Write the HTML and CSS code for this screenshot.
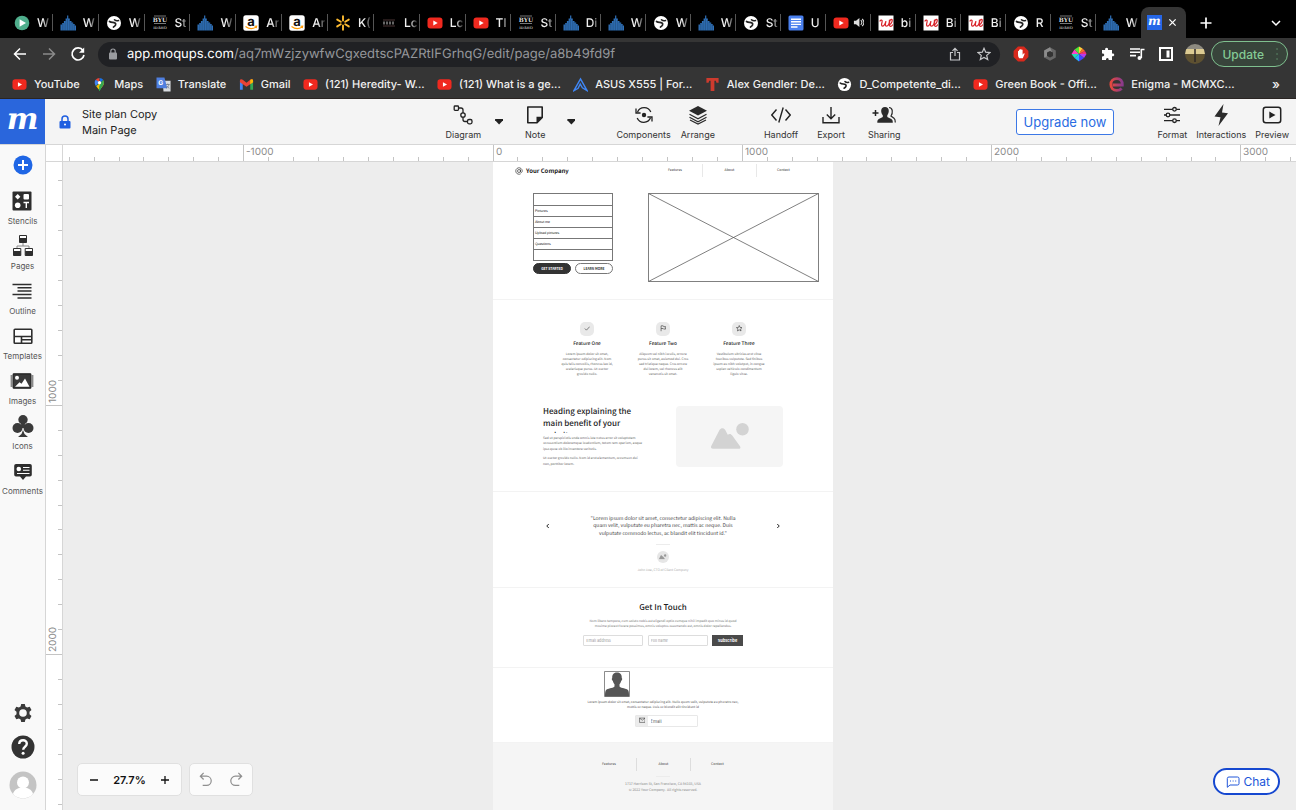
FILE: index.html
```html
<!DOCTYPE html>
<html lang="en">
<head>
<meta charset="utf-8">
<title>Site plan Copy - Main Page</title>
<link rel="stylesheet" href="styles.css">
</head>
<body>
<svg class="defs" aria-hidden="true">
  <symbol id="i-play" viewBox="0 0 16 16"><circle cx="8" cy="8" r="7.3" fill="#4fae8c"/><path d="M5.6 4.2v7.6L12 8z" fill="#fff"/></symbol>
  <symbol id="i-bars" viewBox="0 0 16 16"><path d="M.5 15.500V9.500h1.700V8h1.700V6h1.700V3.500h1.500V.5h1.200v3h1.500V6h1.700v1.500h1.700V9h1.500v1.500h1.500v5z" fill="#2f70b8"/><path d="M2.300 9v7M4 8v8M5.800 5v11M7.500 4v12M9.300 5v11M11 7v9M12.800 8v8M14.400 10v6" stroke="#123" stroke-width=".3"/></symbol>
  <symbol id="i-globe" viewBox="0 0 16 16"><circle cx="8" cy="8" r="7" fill="#fff"/><path d="M3.500 6.500c2 1.500 4 .5 5.500 1.500s.5 3-1.500 4" fill="none" stroke="#222" stroke-width="1.700" stroke-linecap="round"/><path d="M8.500 4.800c1 1 2.500 1.200 4 .8" fill="none" stroke="#222" stroke-width="1.600" stroke-linecap="round"/></symbol>
  <symbol id="i-byu" viewBox="0 0 16 16"><path d="M2 1h12M2 8.500h12" stroke="#aaa" stroke-width=".7"/><text x="8" y="7" text-anchor="middle" class="byu">BYU</text><text x="8" y="14" text-anchor="middle" class="byu-sub">IDAHO</text></symbol>
  <symbol id="i-amazon" viewBox="0 0 16 16"><rect x=".3" y=".3" width="15.400" height="15.400" rx="2.500" fill="#fff"/><text x="8" y="10.500" text-anchor="middle" class="amz">a</text><path d="M2.500 11.500c3.500 2.600 7.500 2.600 10.500.6M11.500 11.300l2.200-.1-.5 2" fill="none" stroke="#f90" stroke-width="1.100"/></symbol>
  <symbol id="i-spark" viewBox="0 0 16 16"><path d="M8 1.200v4.300M8 10.500v4.300M2.200 4.600l3.600 2.100M10.200 9.300l3.600 2.100M2.200 11.400l3.600-2.100M10.200 6.700l3.600-2.100" stroke="#fdbb30" stroke-width="1.900" stroke-linecap="round"/></symbol>
  <symbol id="i-dim" viewBox="0 0 16 16"><path d="M2 5h12M2 11h12" stroke="#4b3535"/><path d="M2 8h12" stroke="#666" stroke-width="3" stroke-dasharray="2 1"/></symbol>
  <symbol id="i-yt" viewBox="0 0 16 16"><rect x=".5" y="2.500" width="15" height="11" rx="3" fill="#f0291f"/><path d="M6.300 5.500v5L10.700 8z" fill="#fff"/></symbol>
  <symbol id="i-docs" viewBox="0 0 16 16"><rect x=".5" y=".5" width="15" height="15" rx="1.500" fill="#4a80ee"/><path d="M3 4.200h10M3 6.800h10M3 9.400h10M3 12h6.500" stroke="#fff" stroke-width="1.400"/></symbol>
  <symbol id="i-wal" viewBox="0 0 16 16"><rect x=".5" y=".5" width="15" height="15" fill="#fff"/><path d="M2 6c.8-1.500 2.600-1.200 2.100.8-.6 2.200-1 4.400.4 4.400 1.500 0 2.600-2.300 3.500-5-.8 2.700-1 5 .4 5 1.900 0 3.300-3.500 3-6M10.500 9.700c3.300 0 4.700-5.400 3-5.400-1.900 0-3.700 7.200-.8 7 .8 0 1.400-.6 1.800-1.400" fill="none" stroke="#d8232a" stroke-width="1.200" stroke-linecap="round"/></symbol>
  <symbol id="i-mountain" viewBox="0 0 152 104"><circle cx="126" cy="25" r="25"/><path d="M2 90 34 28c6-10 17-10 23 0l10 19c6-5 13-5 18 3l31 43c4 6 1 10-5 10H8c-8 0-10-6-6-13z"/></symbol>
</svg>

<div class="browser">
  <div class="tabs">
    <a class="tab wide" href="#"><svg><use href="#i-play"/></svg><span>W</span></a>
    <a class="tab wide" href="#"><svg><use href="#i-bars"/></svg><span>W</span></a>
    <a class="tab wide" href="#"><svg><use href="#i-globe"/></svg><span>W</span></a>
    <a class="tab wide" href="#"><svg><use href="#i-byu"/></svg><span>St</span></a>
    <a class="tab wide" href="#"><svg><use href="#i-bars"/></svg><span>W</span></a>
    <a class="tab wide" href="#"><svg><use href="#i-amazon"/></svg><span>Ar</span></a>
    <a class="tab wide" href="#"><svg><use href="#i-amazon"/></svg><span>Ar</span></a>
    <a class="tab wide" href="#"><svg><use href="#i-spark"/></svg><span>K(</span></a>
    <a class="tab wide" href="#"><svg><use href="#i-dim"/></svg><span>Lc</span></a>
    <a class="tab wide" href="#"><svg><use href="#i-yt"/></svg><span>Lc</span></a>
    <a class="tab" href="#"><svg><use href="#i-yt"/></svg><span>Tl</span></a>
    <a class="tab" href="#"><svg><use href="#i-byu"/></svg><span>St</span></a>
    <a class="tab" href="#"><svg><use href="#i-bars"/></svg><span>Di</span></a>
    <a class="tab" href="#"><svg><use href="#i-bars"/></svg><span>W</span></a>
    <a class="tab" href="#"><svg><use href="#i-globe"/></svg><span>W</span></a>
    <a class="tab" href="#"><svg><use href="#i-bars"/></svg><span>W</span></a>
    <a class="tab" href="#"><svg><use href="#i-globe"/></svg><span>St</span></a>
    <a class="tab" href="#"><svg><use href="#i-docs"/></svg><span>U</span></a>
    <a class="tab audible" href="#" aria-label="Playing tab"><svg><use href="#i-yt"/></svg><svg class="speaker" viewBox="0 0 12 12"><path d="M1 4h2.300L7 1v10L3.300 8H1z" fill="#ddd"/><path d="M8.500 3.500c1.500 1.500 1.500 3.500 0 5M10 2c2.300 2.400 2.300 5.600 0 8" fill="none" stroke="#ddd" stroke-width="1.100"/></svg></a>
    <a class="tab" href="#"><svg><use href="#i-wal"/></svg><span>bi</span></a>
    <a class="tab" href="#"><svg><use href="#i-wal"/></svg><span>Bi</span></a>
    <a class="tab" href="#"><svg><use href="#i-wal"/></svg><span>Bi</span></a>
    <a class="tab" href="#"><svg><use href="#i-globe"/></svg><span>R</span></a>
    <a class="tab" href="#"><svg><use href="#i-byu"/></svg><span>St</span></a>
    <a class="tab last" href="#"><svg><use href="#i-bars"/></svg><span>W</span></a>
    <div class="tab-active"><span class="m-fav">m</span><button class="bare" aria-label="Close tab"><svg viewBox="0 0 10 10"><path d="M1.500 1.500l7 7M8.500 1.500l-7 7" stroke="#fff" stroke-width="1.400"/></svg></button></div>
    <button class="bare newtab" aria-label="New tab"><svg viewBox="0 0 12 12"><path d="M6 .5v11M.5 6h11" stroke="#fff" stroke-width="1.700"/></svg></button>
    <button class="bare tabmenu" aria-label="Search tabs"><svg viewBox="0 0 12 12"><path d="M2 4l4 4 4-4" fill="none" stroke="#fff" stroke-width="1.500"/></svg></button>
  </div>

  <div class="navrow">
    <button class="bare" aria-label="Back"><svg viewBox="0 0 16 16"><path d="M14 8H3M8 2.500L2.500 8 8 13.500" fill="none" stroke="#fff" stroke-width="1.500"/></svg></button>
    <button class="bare" aria-label="Forward"><svg viewBox="0 0 16 16"><path d="M2 8h11M8 2.500L13.500 8 8 13.500" fill="none" stroke="#8b8b8b" stroke-width="1.500"/></svg></button>
    <button class="bare" aria-label="Reload"><svg viewBox="0 0 16 16"><path d="M13 4.500A6 6 0 1 0 14 9" fill="none" stroke="#fff" stroke-width="1.700"/><path d="M14.200 1.500v5.200H9z" fill="#fff"/></svg></button>
    <div class="url">
      <svg class="url-lock" viewBox="0 0 10 12"><rect x="1" y="4.500" width="8" height="7" rx="1" fill="#9a9ca0"/><path d="M2.800 5V3.200a2.200 2.200 0 0 1 4.400 0V5" fill="none" stroke="#9a9ca0" stroke-width="1.200"/></svg>
      <p class="url-text">app.moqups.com<span>/aq7mWzjzywfwCgxedtscPAZRtIFGrhqG/edit/page/a8b49fd9f</span></p>
      <button class="bare" aria-label="Share"><svg viewBox="0 0 14 14"><path d="M5 5.500H2.500V13h9V5.500H9M7 9V1.500M4.500 3.800L7 1.300l2.500 2.500" fill="none" stroke="#c6c7c9" stroke-width="1.200"/></svg></button>
      <button class="bare" aria-label="Bookmark"><svg viewBox="0 0 14 14"><path d="M7 1.300l1.700 3.900 4.200.4-3.200 2.800 1 4.200L7 10.400l-3.700 2.200 1-4.200L1.100 5.600l4.200-.4z" fill="none" stroke="#c6c7c9" stroke-width="1.200"/></svg></button>
    </div>
    <div class="exts">
      <svg viewBox="0 0 16 16"><path d="M5 .6h6L15.400 5v6L11 15.400H5L.6 11V5z" fill="#d9291c"/><path d="M5 8V5.200c0-.7 1-.7 1 0V4c0-.8 1.200-.8 1.200 0v-.4c0-.8 1.200-.8 1.200 0V4c0-.8 1.200-.8 1.200 0v4.800l1-1.200c.6-.6 1.300 0 .9.700L9.800 12.200H6.200C5.300 11 5 10 5 8z" fill="#fff"/></svg>
      <svg viewBox="0 0 16 16"><path d="M8 1.300l5.800 3.300v6.800L8 14.700l-5.800-3.300V4.600z" fill="#666"/><path d="M8 1.300L11 8l-8.800 3.400V4.600z" fill="#8c8c8c"/><path d="M8 5l3 1.600v3.300L8 11.500 5 9.900V6.600z" fill="#333"/></svg>
      <svg viewBox="0 0 16 16"><path d="M8 8V.5l3.500 2z" fill="#ffd13b"/><path d="M8 8l3.500-5.500L14 5z" fill="#ff6a2b"/><path d="M8 8l6-3 1.500 3z" fill="#f0317a"/><path d="M8 8h7.500L13 12z" fill="#b33df1"/><path d="M8 8l5 4-5 3.500z" fill="#4046ff"/><path d="M8 8v7.500L3.500 12z" fill="#25b6ff"/><path d="M8 8l-4.500 4L.5 8z" fill="#24ddb3"/><path d="M8 8H.5L3.500 3.500z" fill="#ff40c8"/><path d="M8 8L3.500 3.500 8 .5z" fill="#52e334"/></svg>
      <svg viewBox="0 0 16 16"><path d="M2 4h3.200c-.8-3 3.600-3 2.800 0H12v3.600c3-.8 3 3.200 0 2.600V14H8.600c.6-2.800-3-2.800-2.600 0H2v-3.600c3 .4 3-3.200 0-2.800z" fill="#fff"/></svg>
      <svg viewBox="0 0 16 16"><path d="M1 3h10M1 6.300h10M1 9.600h6" stroke="#fff" stroke-width="1.600"/><circle cx="10.500" cy="12" r="2" fill="#fff"/><path d="M12.300 12V3.500H15.500" fill="none" stroke="#fff" stroke-width="1.600"/></svg>
      <svg viewBox="0 0 16 16"><rect x="2" y="2" width="12" height="12" fill="#333" stroke="#fff" stroke-width="2"/><path d="M8.500 4.500h3v7h-3z" fill="#fff"/></svg>
      <svg class="me" viewBox="0 0 20 20"><clipPath id="c"><circle cx="10" cy="10" r="10"/></clipPath><g clip-path="url(#c)"><path d="M0 0h20v6H0z" fill="#8d8a80"/><path d="M0 5h20v5H0z" fill="#dccb92"/><path d="M0 10h20v10H0z" fill="#5e5131"/><path d="M10 5v13" stroke="#2c2727" stroke-width="1.500"/></g></svg>
      <button class="update">Update<svg viewBox="0 0 4 14"><path d="M2 2h.1M2 7h.1M2 12h.1" stroke="#4c6b55" stroke-width="2" stroke-linecap="round"/></svg></button>
    </div>
  </div>

  <nav class="bookmarks">
    <a href="#"><svg><use href="#i-yt"/></svg>YouTube</a>
    <a href="#"><svg viewBox="0 0 16 16"><path d="M8 1a5 5 0 0 0-4 1.900L8 6z" fill="#ea4335"/><path d="M4 2.900C2 5 3 8 4.300 9.600L8 5.500z" fill="#4285f4"/><path d="M4.300 9.600C6.500 12 7.300 13 8 15.200c.6-2.200 1.500-3.200 2.800-4.800L8 6z" fill="#34a853"/><path d="M4.600 9.900L12 3.600c1.500 3 .4 5-1.600 7.300L7 13z" fill="#fbbc04"/><path d="M10.400 10.900C12.500 8.500 13.500 6 12 3L9.500 6l-2 4L8 15.200z" fill="#34a853"/><path d="M8 1a5 5 0 0 1 4 2L9 6z" fill="#1a73e8"/><circle cx="8" cy="6" r="1.700" fill="#fff"/></svg>Maps</a>
    <a href="#"><svg viewBox="0 0 16 16"><path d="M7 4h8.500v11.500H8z" fill="#d8dbe0"/><path d="M.5.5H9L12 12H.5z" fill="#4f7fe0"/><text x="2.500" y="9" class="gt">G</text><path d="M10.500 8h4M12.500 7v1M13.800 8c-.5 2-1.500 3-3 4M11.500 9.500c.6 1 1.500 2 2.700 2.500" fill="none" stroke="#5f6b80" stroke-width=".7"/></svg>Translate</a>
    <a href="#"><svg viewBox="0 0 16 16"><path d="M1 4v9.500h3V7z" fill="#4285f4"/><path d="M15 4v9.500h-3V7z" fill="#34a853"/><path d="M1 4c0-1.600 1.800-2 3-1l4 3 4-3c1.200-1 3-.6 3 1v1.500L8 10.500 1 5.500z" fill="#ea4335"/><path d="M12 3c1.200-1 3-.6 3 1v1.500L12 7.700z" fill="#fbbc04"/></svg>Gmail</a>
    <a href="#"><svg><use href="#i-yt"/></svg>(121) Heredity- W...</a>
    <a href="#"><svg><use href="#i-yt"/></svg>(121) What is a ge...</a>
    <a href="#"><svg viewBox="0 0 16 16"><path d="M8 2l7 12.500-5-3-2.300-4L5.500 12 1 14.500z" fill="none" stroke="#3f86f4" stroke-width="1.500"/></svg>ASUS X555 | For...</a>
    <a href="#"><svg viewBox="0 0 16 16"><path d="M1.500 1h13v5h-2.300l-.7-2H10v11H6V4H4.500l-.7 2H1.500z" fill="#cd3b2e"/></svg>Alex Gendler: De...</a>
    <a href="#"><svg><use href="#i-globe"/></svg>D_Competente_di...</a>
    <a href="#"><svg><use href="#i-yt"/></svg>Green Book - Offi...</a>
    <a href="#"><svg viewBox="0 0 16 16"><linearGradient id="eg"><stop offset="0" stop-color="#e5483d"/><stop offset="1" stop-color="#8a3a8c"/></linearGradient><path d="M4 8.500h10.200C14.500 4 12 1.800 8.500 1.800 4.500 1.800 2 4.500 2 8s2.500 6.300 6.300 6.300c2 0 3.900-.7 5.200-2.100" fill="none" stroke="url(#eg)" stroke-width="3"/></svg>Enigma - MCMXC...</a>
    <button class="bare more" aria-label="More bookmarks">»</button>
  </nav>
</div>

<header class="appbar">
  <a class="logo" href="#">m</a>
  <svg class="lock" viewBox="0 0 12 14"><rect x=".5" y="6" width="11" height="7.500" rx="1" fill="#1f5fe0"/><path d="M3 6V4a3 3 0 0 1 6 0v2" fill="none" stroke="#1f5fe0" stroke-width="1.500"/><circle cx="6" cy="9.500" r="1" fill="#fff"/></svg>
  <div class="titles"><p>Site plan Copy</p><p>Main Page</p></div>
  <div class="tools first">
    <button class="tool"><svg viewBox="0 0 20 20"><path d="M5.500 3h2.500q2 0 2 2v3M10 12v2.500q0 2 2 2h2.500" fill="none" stroke="#222" stroke-width="1.300"/><rect x="1.200" y="1" width="4.300" height="4.300" rx=".8" fill="none" stroke="#222" stroke-width="1.300"/><circle cx="10" cy="10" r="2.200" fill="none" stroke="#222" stroke-width="1.300"/><rect x="14.500" y="14.500" width="4.500" height="4.300" rx="1.500" fill="none" stroke="#222" stroke-width="1.300"/></svg>Diagram</button>
    <button class="caret" aria-label="Diagram options"></button>
    <button class="tool note"><svg viewBox="0 0 20 20"><path d="M2.800 2h14.400v10.500L12 17.800H2.800z" fill="none" stroke="#222" stroke-width="1.600" stroke-linejoin="round"/><path d="M11.500 18.300v-6.500H18z" fill="#222"/></svg>Note</button>
    <button class="caret" aria-label="Note options"></button>
  </div>
  <div class="tools second">
    <button class="tool"><svg viewBox="0 0 20 20"><path d="M3.500 7.200A7.200 7.200 0 0 1 16.800 7M16.500 12.800A7.200 7.200 0 0 1 3.200 13" fill="none" stroke="#222" stroke-width="1.300"/><path d="M2 3.500V8h4.600M18 16.500V12h-4.600" fill="none" stroke="#222" stroke-width="1.300"/><circle cx="10" cy="10" r="2.200" fill="#222"/></svg>Components</button>
    <button class="tool"><svg viewBox="0 0 20 20"><path d="M10 1l9 4.800-9 4.700-9-4.700z" fill="#2b2b2b"/><path d="M1.500 9.200L10 13.700l8.500-4.500M1.500 12.200l8.500 4.500 8.500-4.500M2 15l8 4 8-4" fill="none" stroke="#2b2b2b" stroke-width="1.200"/></svg>Arrange</button>
  </div>
  <div class="tools third">
    <button class="tool"><svg viewBox="0 0 20 20"><path d="M5.500 4.500L.8 10l4.700 5.500M14.500 4.500l4.700 5.500-4.700 5.500M12.200 2.500l-4.400 15" fill="none" stroke="#222" stroke-width="1.400"/></svg>Handoff</button>
    <button class="tool"><svg viewBox="0 0 20 20"><path d="M2 12v5.800h16V12M10 2v11.500M5.800 9.500l4.200 4.200 4.200-4.200" fill="none" stroke="#222" stroke-width="1.400"/></svg>Export</button>
    <button class="tool"><svg class="share" viewBox="0 0 24 20"><path d="M3.500 5v6M.5 8h6" stroke="#222" stroke-width="1.500"/><path d="M13 2c5 0 4.300 6 2.300 8.200v1.700l4 2c1.300.7 1.500 2 1.500 3.800H5.300c0-1.800.2-3.100 1.500-3.800l4-2v-1.700C8.700 8 8 2 13 2z" fill="#2b2b2b"/><path d="M17 2.500c4 0 4 5.500 2 8.500l3 2.300c1 .8 1.300 2 1.300 4.200" fill="none" stroke="#2b2b2b" stroke-width="1.200"/></svg>Sharing</button>
  </div>
  <button class="upgrade">Upgrade now</button>
  <div class="tools fourth">
    <button class="tool"><svg viewBox="0 0 20 20"><path d="M2 4.300h16M2 10h16M2 15.700h16" stroke="#222" stroke-width="1.300"/><g fill="#f4f4f4" stroke="#222" stroke-width="1.300"><circle cx="12.500" cy="4.300" r="1.800"/><circle cx="6" cy="10" r="1.800"/><circle cx="12.500" cy="15.700" r="1.800"/></g></svg>Format</button>
    <button class="tool"><svg class="bolt" viewBox="0 0 20 22"><path d="M12.500 0L3.500 12.500l6 .8L7.500 22 17 9.300l-6-.8z" fill="#2b2b2b"/></svg>Interactions</button>
    <button class="tool"><svg viewBox="0 0 20 20"><rect x="1.300" y="2.300" width="17.400" height="15.400" rx="2.500" fill="none" stroke="#222" stroke-width="1.500"/><path d="M7.300 6.500v7l6.200-3.500z" fill="#222"/></svg>Preview</button>
  </div>
</header>

<main class="work">
  <aside class="side">
    <button class="bare add" aria-label="Add"><svg viewBox="0 0 20 20"><circle cx="10" cy="10" r="9.500" fill="#1f66e5"/><path d="M10 5v10M5 10h10" stroke="#fff" stroke-width="2"/></svg></button>
    <button class="pane"><svg viewBox="0 0 24 24"><rect x="2.500" y="2.500" width="19" height="19" rx="1" fill="#2e2e2e"/><path d="M7.700 5l2.700 2.700-2.700 2.700L5 7.700z" fill="#fff"/><rect x="13.500" y="5" width="5.500" height="5.500" rx="1" fill="#fff"/><circle cx="7.700" cy="16.300" r="2.800" fill="#fff"/><path d="M13.500 13.500h5.500M16.300 13.500V19" stroke="#fff" stroke-width="1.400"/></svg>Stencils</button>
    <button class="pane"><svg viewBox="0 0 24 24"><path d="M12 9v3M6 14v-2h12v2" fill="none" stroke="#888"/><g fill="#fff" stroke="#2e2e2e"><path d="M8.500 1.500h7v7h-7zM2.500 14.500h7.300v7H2.500zM14.200 14.500h7.300v7h-7.300z"/></g><path d="M8.500 4h7v4.500h-7zM2.500 17h7.300v4.500H2.500zM14.200 17h7.300v4.500h-7.300z" fill="#2e2e2e"/></svg>Pages</button>
    <button class="pane"><svg viewBox="0 0 24 24"><path d="M2.500 5.500h19M7.500 8.700h14M7.500 12h14M2.500 15.500h19M7.500 19h14" stroke="#2e2e2e" stroke-width="1.500"/></svg>Outline</button>
    <button class="pane"><svg viewBox="0 0 24 24"><rect x="3.200" y="5.200" width="17.600" height="14" rx=".8" fill="#fff" stroke="#2e2e2e" stroke-width="1.600"/><path d="M3 12.500h18M10.500 12.500V19M10.500 15.800H21" stroke="#2e2e2e" stroke-width="1.600"/></svg>Templates</button>
    <button class="pane"><svg viewBox="0 0 24 24"><path d="M1.500 6v12M22.500 6v12" stroke="#8a8a8a" stroke-width="1.800"/><rect x="3.200" y="4.800" width="17.600" height="14.400" rx=".6" fill="#3a3a3a" stroke="#222" stroke-width="1.200"/><circle cx="7" cy="8.700" r="2" fill="#fff"/><path d="M5 17.800l4.500-4.500 2 1.500 3.500-5.300 4.500 8.300z" fill="#fff"/></svg>Images</button>
    <button class="pane"><svg viewBox="0 0 24 24"><g fill="#3a3a3a"><circle cx="12" cy="5.700" r="4.700"/><circle cx="6.500" cy="14" r="5"/><circle cx="17.500" cy="14" r="5"/><path d="M10.500 8h3l1 6h-5zM12 16l1.500 4 3.500 3H7l3.500-3z"/></g></svg>Icons</button>
    <button class="pane"><svg viewBox="0 0 24 24"><path d="M5 5h14a1.800 1.800 0 0 1 1.800 1.800v9A1.800 1.800 0 0 1 19 17.600h-4L12 21l-3-3.400H5a1.800 1.800 0 0 1-1.800-1.800v-9A1.800 1.800 0 0 1 5 5z" fill="#2e2e2e"/><circle cx="7.800" cy="10" r="2.300" fill="#fff"/><path d="M12 8.500h6.500M12 11.200h6.500M6 14.500h12.500" stroke="#fff" stroke-width="1.100"/></svg>Comments</button>
    <div class="side-end">
      <button class="bare" aria-label="Settings"><svg class="s20" viewBox="0 0 20 20"><path d="M8.200 1h3.600l.6 2.600 1.700 1 2.600-.8 1.800 3.100-2 1.900v2.400l2 1.900-1.800 3.100-2.600-.8-1.700 1-.6 2.600H8.200l-.6-2.600-1.700-1-2.600.8-1.800-3.100 2-1.900V8.800l-2-1.900 1.800-3.100 2.600.8 1.700-1z" fill="#3a3a3a"/><circle cx="10" cy="10" r="3.800" fill="#f9f9f9"/></svg></button>
      <button class="bare" aria-label="Help"><svg class="s24" viewBox="0 0 24 24"><circle cx="12" cy="12" r="11.500" fill="#333"/><path d="M8.200 9c.2-5 7.700-4.900 7.600-.2 0 3-3.600 2.900-3.600 5.900" fill="none" stroke="#fff" stroke-width="2.400"/><circle cx="12.100" cy="18.300" r="1.500" fill="#fff"/></svg></button>
      <button class="bare" aria-label="Account"><svg class="s28" viewBox="0 0 28 28"><circle cx="14" cy="14" r="13.500" fill="#c4c4c4"/><circle cx="14" cy="11.500" r="6" fill="#fff"/><path d="M4 23c1-5 6-6.500 10-6.500S23 18 24 23a13.500 13.500 0 0 1-20 0z" fill="#fff"/></svg></button>
    </div>
  </aside>
  <div class="stage">
    <div class="corner"></div>
    <svg class="ruler-x" id="ruler-x"></svg>
    <svg class="ruler-y" id="ruler-y"></svg>
    <div class="canvas">
      <article class="board">
        <header class="b-head">
          <div class="b-brand"><svg viewBox="0 0 32 32"><circle cx="16" cy="16" r="6" fill="none" stroke="#222" stroke-width="2.500"/><path d="M22 10v8c0 6 7 5 7-2a13 13 0 1 0-6 11" fill="none" stroke="#222" stroke-width="2.500"/></svg>Your Company</div>
          <nav class="b-nav"><a href="#">Features</a><a href="#">About</a><a href="#">Contact</a></nav>
        </header>
        <section class="b-hero">
          <div class="b-left">
            <ul class="b-list"><li></li><li>Pictures</li><li>About me</li><li>Upload pictures</li><li>Questions</li><li></li></ul>
            <div class="b-ctas"><button class="dark">GET STARTED</button><button>LEARN MORE</button></div>
          </div>
          <svg class="b-pic" viewBox="0 0 684 356" preserveAspectRatio="none"><path d="M2 2h680v352H2zL682 354M682 2L2 354" fill="none" stroke="#555" stroke-width="3"/></svg>
        </section>
        <section class="b-features">
          <div class="b-cols">
            <div class="b-col"><span class="b-ico"><svg viewBox="0 0 24 24"><path d="M3 13l6 6L21 6" fill="none" stroke="#222" stroke-width="2"/></svg></span><h3>Feature One</h3><p>Lorem ipsum dolor sit amet,<br>consectetur adipiscing elit. Nam<br>quis felis convallis, rhoncus leo id,<br>scelerisque purus. Ut auctor<br>gravida nulla.</p></div>
            <div class="b-col"><span class="b-ico"><svg viewBox="0 0 24 24"><path d="M4 23V3h8l1.500 3H21l-2 5 2 4h-8l-1.500-2H4" fill="none" stroke="#222" stroke-width="2"/></svg></span><h3>Feature Two</h3><p>Aliquam vel nibh iaculis, ornare<br>purus sit amet, euismod dui. Cras<br>sed tristique neque. Cras ornare<br>dui lorem, vel rhoncus elit<br>venenatis sit amet.</p></div>
            <div class="b-col"><span class="b-ico"><svg viewBox="0 0 24 24"><path d="M12 2l3 7 7.500.6-5.700 5 1.800 7.400-6.600-4-6.600 4 1.800-7.400-5.700-5L9 9z" fill="none" stroke="#222" stroke-width="2"/></svg></span><h3>Feature Three</h3><p>Vestibulum ultricies erat vitae<br>faucibus vulputate. Sed finibus<br>ipsum eu nibh volutpat, in congue<br>sapien vehicula condimentum<br>ligula vitae.</p></div>
          </div>
          <div class="b-benefit">
            <div class="b-copy">
              <h2>Heading explaining the<br>main benefit of your<br>website</h2>
              <p>Sed ut perspiciatis unde omnis iste natus error sit voluptatem<br>accusantium doloremque laudantium, totam rem aperiam, eaque<br>ipsa quae ab illo inventore veritatis.</p>
              <p>Ut auctor gravida nulla. Nam id erat elementum, accumsan dui<br>non, porttitor lorem.</p>
            </div>
            <div class="b-image"><svg><use href="#i-mountain"/></svg></div>
          </div>
        </section>
        <section class="b-quote">
          <button class="bare" aria-label="Previous"><svg viewBox="0 0 24 24"><path d="M15 4l-8 8 8 8" fill="none" stroke="#222" stroke-width="4"/></svg></button>
          <div class="b-said">
            <blockquote>"Lorem ipsum dolor sit amet, consectetur adipiscing elit. Nulla<br>quam velit, vulputate eu pharetra nec, mattis ac neque. Duis<br>vulputate commodo lectus, ac blandit elit tincidunt id."</blockquote>
            <hr>
            <span class="b-face"><svg><use href="#i-mountain"/></svg></span>
            <cite>John Doe, CTO of Client Company</cite>
          </div>
          <button class="bare" aria-label="Next"><svg viewBox="0 0 24 24"><path d="M9 4l8 8-8 8" fill="none" stroke="#222" stroke-width="4"/></svg></button>
        </section>
        <section class="b-touch">
          <h2>Get In Touch</h2>
          <p>Nam libero tempore, cum soluta nobis est eligendi optio cumque nihil impedit quo minus id quod<br>maxime placeat facere possimus, omnis voluptas assumenda est, omnis dolor repellendus.</p>
          <form class="b-form"><input type="text" placeholder="Email address" aria-label="Email address"><input type="text" placeholder="Full name" aria-label="Full name"><button type="button">Subscribe</button></form>
        </section>
        <section class="b-about">
          <svg class="b-person" viewBox="0 0 104 104"><path d="M2 2h100v100H2z" fill="#fff" stroke="#666" stroke-width="3"/><path d="M52 6c15 0 20 11 19 22 3 1 2 10-2 11-2 8-5 11-7 14v9c8 8 28 7 34 14 4 5 4 15 4 26H4c0-11 0-21 4-26 6-7 26-6 34-14v-9c-2-3-5-6-7-14-4-1-5-10-2-11C32 17 37 6 52 6z" fill="#555"/></svg>
          <p>Lorem ipsum dolor sit amet, consectetur adipiscing elit. Nulla quam velit, vulputate eu pharetra nec,<br>mattis ac neque. Duis ac blandit elit tincidunt id</p>
          <label class="b-mail"><span><svg viewBox="0 0 24 24"><path d="M2 4h20v16H2zL12 12 22 4" fill="none" stroke="#333" stroke-width="2"/></svg></span><input type="email" placeholder="Email" aria-label="Email"></label>
        </section>
        <footer class="b-foot">
          <nav class="b-nav"><a href="#">Features</a><a href="#">About</a><a href="#">Contact</a></nav>
          <hr>
          <p>1717 Harrison St, San Francisco, CA 94103, USA</p>
          <p>© 2022 Your Company. &nbsp;All rights reserved.</p>
        </footer>
      </article>
      <div class="dock">
        <div class="dock-box zoombox"><button class="bare" aria-label="Zoom out"><svg viewBox="0 0 10 10"><path d="M1 5h8" stroke="#111" stroke-width="1.500"/></svg></button><span>27.7%</span><button class="bare" aria-label="Zoom in"><svg viewBox="0 0 10 10"><path d="M1 5h8M5 1v8" stroke="#111" stroke-width="1.300"/></svg></button></div>
        <div class="dock-box undobox"><button class="bare" aria-label="Undo"><svg viewBox="0 0 16 16"><path d="M2.500 4.500h6.700a4.900 4.900 0 0 1 0 9.800H5M6 1L2.500 4.500 6 8" fill="none" stroke="#8f8f8f" stroke-width="1.300"/></svg></button><button class="bare" aria-label="Redo"><svg viewBox="0 0 16 16"><path d="M13.500 4.500H6.800a4.900 4.900 0 0 0 0 9.800H11M10 1l3.500 3.500L10 8" fill="none" stroke="#8f8f8f" stroke-width="1.300"/></svg></button></div>
      </div>
      <button class="chat"><svg viewBox="0 0 14 14"><path d="M3 2h8.500a1.500 1.500 0 0 1 1.500 1.500v5a1.500 1.500 0 0 1-1.500 1.500H4l-2.700 2.300V3.500A1.600 1.600 0 0 1 3 2z" fill="none" stroke="#2156d9"/><path d="M4 6h1M6.600 6h1M9.200 6h1" stroke="#2156d9" stroke-width="1.200"/></svg>Chat</button>
    </div>
  </div>
</main>
<script src="ruler.js"></script>
</body>
</html>
```
FILE: styles.css
```css
* { box-sizing: border-box; }
body {
  margin: 0;
  height: 100vh;
  display: flex;
  flex-direction: column;
  overflow: hidden;
  font-family: Inter, "Liberation Sans", sans-serif;
  color: #222;
  text-rendering: geometricPrecision;
}
p, h2, h3, ul, blockquote { margin: 0; padding: 0; }
a { color: inherit; text-decoration: none; }
button, input { font: inherit; color: inherit; }
svg { display: block; flex: none; }
.defs { position: absolute; width: 0; height: 0; }
.bare { border: 0; background: none; padding: 0; display: flex; align-items: center; justify-content: center; }

/* Browser window */
.browser { flex: none; background: #353535; color: #f1f1f1; border-bottom: 1px solid #2a2523; }
.tabs { display: flex; height: 38px; padding: 7px 0 0 7px; background: #000; }
.tab { flex: 45 1 0; min-width: 0; display: flex; align-items: center; gap: 7px; padding-left: 7px; font-size: 12px; font-weight: 500; position: relative; }
.tab.wide { flex-grow: 46; }
.tab::after { content: ""; position: absolute; right: 0; top: 7px; height: 17px; width: 1px; background: #555; }
.tab.last::after { display: none; }
.tab svg { width: 16px; height: 16px; }
.tab.audible { gap: 4px; }
.tab .speaker { width: 11px; height: 11px; }
.tab span { white-space: nowrap; -webkit-mask-image: linear-gradient(90deg, #000 6px, transparent 14px); mask-image: linear-gradient(90deg, #000 6px, transparent 14px); }
.byu { font: bold 6px "DejaVu Serif", serif; fill: #ddd; }
.byu-sub { font: bold 4px "Liberation Serif", serif; fill: #aaa; }
.amz { font: bold 13px Inter, sans-serif; fill: #111; }
.gt { font: bold 7px Inter, sans-serif; fill: #fff; }
.tab-active { flex: 0 0 45px; display: flex; align-items: center; gap: 6px; padding-left: 6px; background: #353535; border-radius: 8px 8px 0 0; }
.tab-active svg { width: 9px; height: 9px; }
.m-fav { width: 15px; height: 15px; background: #2667e8; color: #fff; font: italic bold 12px/13px "DejaVu Serif", serif; text-align: center; }
.newtab { margin-left: 14px; }
.newtab svg, .tabmenu svg { width: 12px; height: 12px; }
.tabmenu { margin: 0 14px 0 58px; }

.navrow { display: flex; align-items: center; height: 32px; padding: 0 8px 0 12px; gap: 13px; }
.navrow > .bare svg { width: 16px; height: 16px; }
.url { flex: 1; display: flex; align-items: center; gap: 15px; height: 25px; margin-left: -1px; padding: 0 9px 0 10px; border-radius: 13px; background: #202124; }
.url svg { width: 14px; height: 14px; }
.url .url-lock { width: 10px; height: 12px; margin-right: -6px; }
.url-text { flex: 1; min-width: 0; font-size: 13px; line-height: 18px; color: #fff; white-space: nowrap; }
.url-text span { color: #95979b; }
.exts { display: flex; align-items: center; gap: 13px; }
.exts svg { width: 16px; height: 16px; }
.exts .me { width: 20px; height: 20px; margin: 0 -2px; }
.update { display: flex; align-items: center; gap: 11px; height: 26px; margin-left: -5px; padding: 0 8px 0 10px; border: 1px solid #7fc08f; border-radius: 13px; background: #38443b; color: #84ca95; font-size: 12px; font-weight: 500; }
.exts .update svg { width: 4px; height: 14px; }

.bookmarks { display: flex; align-items: center; justify-content: space-between; height: 28px; padding: 0 16px 0 12px; font-size: 11px; font-weight: 500; white-space: nowrap; }
.bookmarks a { display: flex; align-items: center; gap: 7px; }
.bookmarks svg { width: 15px; height: 15px; }
.bookmarks .more { margin-left: 25px; font-size: 13px; }

/* Application bar */
.appbar { flex: none; display: flex; align-items: center; height: 46px; background: #f4f4f4; border-bottom: 1px solid #d6d6d6; }
.logo { align-self: stretch; width: 45px; background: #2a66dc; color: #fff; font: italic bold 30px/42px "DejaVu Serif", serif; text-align: center; }
.lock { width: 12px; height: 14px; margin: 0 11px 0 14px; }
.titles { flex: 1; font-size: 11px; line-height: 16px; }
.tools { display: flex; align-items: center; gap: 10px; }
.tool { display: flex; flex-direction: column; align-items: center; gap: 3px; padding: 3px 0 0; border: 0; background: none; font-size: 9px; line-height: 14px; color: #333; }
.tool svg { width: 20px; height: 20px; }
.tool .share { width: 24px; }
.tool .bolt { height: 22px; margin: -1px 0; }
.caret { width: 8px; height: 6px; padding: 0; border: 0; background: #222; clip-path: polygon(0 0, 100% 0, 100% 30%, 50% 100%, 0 30%); }
.first { gap: 14px; }
.first .note { margin: 0 8px; }
.second { margin-left: 41px; }
.third { margin-left: 49px; gap: 19px; }
.third .tool:nth-child(3) { margin-left: 4px; }
.upgrade { height: 26px; margin: 0 43px 0 115px; padding: 0 7px; border: 1px solid #3c78e6; border-radius: 3px; background: #fff; color: #2a6ce2; font-size: 13px; }
.fourth { gap: 9px; padding-right: 7px; }

/* Sidebar */
.work { flex: 1; min-height: 0; display: flex; }
.side { flex: none; width: 46px; display: flex; flex-direction: column; align-items: center; background: #f9f9f9; border-right: 1px solid #d6d6d6; }
.add { height: 44px; padding-bottom: 4px; }
.add svg, .s20 { width: 20px; height: 20px; }
.pane { display: flex; flex-direction: column; align-items: center; height: 45px; padding: 0; border: 0; background: none; font-size: 8px; line-height: 16px; color: #555; }
.pane svg { width: 24px; height: 24px; }
.side-end { margin-top: auto; padding-bottom: 11px; display: flex; flex-direction: column; align-items: center; gap: 12px; }
.s24 { width: 24px; height: 24px; }
.s28 { width: 28px; height: 28px; }

/* Rulers and canvas */
.stage { flex: 1; min-width: 0; display: grid; grid-template: 17px minmax(0, 1fr) / 17px minmax(0, 1fr); }
.corner { border: solid #d6d6d6; border-width: 0 1px 1px 0; background: #fff; }
.ruler-x, .ruler-y { width: 100%; height: 100%; background: #fff; fill: #8c8c8c; font-size: 10px; }
.ruler-x { border-bottom: 1px solid #d6d6d6; }
.ruler-y { border-right: 1px solid #d6d6d6; }
.tick { fill: #c4c4c4; }
.canvas { position: relative; overflow: hidden; background: #ededed; }
.dock { position: absolute; left: 14px; bottom: 14px; display: flex; gap: 7px; }
.dock-box { display: flex; align-items: center; justify-content: space-between; height: 33px; background: #fbfbfb; border: 1px solid #e0e0e0; border-radius: 5px; }
.zoombox { width: 105px; padding: 0 11px; font-size: 11px; font-weight: 600; color: #111; }
.zoombox svg { width: 10px; height: 10px; }
.undobox { width: 64px; padding: 0 8px; }
.undobox svg { width: 15px; height: 15px; }
.chat { position: absolute; right: 16px; bottom: 15px; display: flex; align-items: center; gap: 3px; height: 27px; padding: 0 8px 0 11px; border: 2px solid #1648d0; border-radius: 14px; background: #fff; color: #2156d9; font-size: 12px; }
.chat svg { width: 14px; height: 14px; }

/* Artboard, drawn in its own units and shown at the canvas zoom */
.board { position: absolute; left: 1720px; top: 0; width: 1360px; height: 2600px; zoom: 0.25; background: #fff; font-family: "Noto Sans CJK SC", "Open Sans", sans-serif; color: #333; display: flex; flex-direction: column; }
.board section { border-bottom: 4px solid #f3f3f3; flex: none; }
.b-head { display: flex; justify-content: space-between; align-items: center; height: 68px; padding: 0 92px 0 88px; }
.b-brand { display: flex; align-items: center; gap: 12px; font-size: 24px; font-weight: 700; color: #222; }
.b-brand svg { width: 32px; height: 32px; }
.b-nav { display: flex; font-size: 14px; line-height: 52px; text-align: center; }
.b-nav a { width: 216px; }
.b-nav a + a { border-left: 4px solid #e8e8e8; }
.b-hero { display: flex; justify-content: space-between; height: 484px; padding: 56px 56px 0 160px; }
.b-left { width: 320px; }
.b-list { list-style: none; border: 3px solid #777; font: 14px/40px "Liberation Sans", sans-serif; color: #111; }
.b-list li { height: 44px; padding-left: 4px; }
.b-list li + li { border-top: 3px solid #777; }
.b-ctas { display: flex; justify-content: space-between; padding-top: 6px; }
.b-ctas button { width: 152px; height: 44px; padding: 0; border: 3px solid #777; border-radius: 22px; background: #fff; font-size: 13px; font-weight: 700; }
.b-ctas .dark { background: #333; border-color: #333; color: #fff; }
.b-pic { width: 684px; height: 356px; }
.b-features { height: 768px; padding: 86px 200px 0 200px; }
.b-cols { display: flex; justify-content: center; }
.b-col { width: 304px; display: flex; flex-direction: column; align-items: center; text-align: center; }
.b-ico { display: flex; align-items: center; justify-content: center; width: 56px; height: 56px; border-radius: 20px; background: #e9e9e9; }
.b-ico svg { width: 26px; height: 26px; }
.b-col h3 { margin: 18px 0 14px; font-size: 19px; line-height: 28px; font-weight: 500; color: #222; }
.b-col p { font-size: 13px; line-height: 20px; color: #666; }
.b-copy p { font-size: 13px; line-height: 21px; color: #666; }
.b-benefit { display: flex; justify-content: space-between; margin-top: 122px; }
.b-copy { display: flex; flex-direction: column; gap: 18px; }
.b-copy h2 { height: 106px; overflow: hidden; margin-bottom: -8px; font-size: 32px; line-height: 47px; font-weight: 500; color: #222; }
.b-image { display: flex; align-items: center; justify-content: center; width: 428px; height: 242px; border-radius: 16px; background: #f5f5f5; }
.b-image svg { width: 152px; height: 104px; fill: #d3d3d3; }
.b-quote { display: flex; justify-content: space-between; height: 384px; padding: 90px 208px 0; color: #444; }
.b-quote .bare { height: 92px; }
.b-quote .bare svg { width: 24px; height: 24px; }
.b-said { display: flex; flex-direction: column; align-items: center; text-align: center; }
.b-said blockquote { font-size: 20px; line-height: 31px; }
.board hr { width: 56px; height: 4px; margin: 28px 0; border: 0; background: #ececec; }
.board .b-said hr { margin: 24px 0; }
.b-face { display: flex; align-items: center; justify-content: center; width: 48px; height: 48px; border-radius: 50%; background: #e6e6e6; }
.b-face svg { width: 30px; height: 22px; fill: #999; }
.b-said cite { margin-top: 18px; font-size: 13px; line-height: 20px; font-style: normal; color: #aaa; }
.b-touch { height: 320px; padding-top: 56px; text-align: center; }
.b-touch h2 { font-size: 32px; line-height: 48px; font-weight: 500; color: #222; }
.b-touch p { margin-top: 16px; font-size: 13px; line-height: 20px; color: #777; }
.b-form { display: flex; justify-content: center; gap: 18px; margin-top: 26px; }
.b-form input { width: 240px; height: 44px; padding: 0 8px; border: 4px solid #ddd; border-radius: 4px; background: #fff; font-size: 15px; }
.board input::placeholder { color: #999; opacity: 1; }
.b-form button { width: 122px; height: 44px; padding: 0; border: 0; background: #4a4a4a; color: #fff; font-size: 16px; font-weight: 700; }
.b-about { display: flex; flex-direction: column; align-items: center; height: 300px; padding-top: 12px; text-align: center; }
.b-person { width: 104px; height: 104px; margin-right: 372px; }
.b-about p { margin-top: 6px; font-size: 13px; line-height: 22px; color: #555; }
.b-mail { display: flex; width: 252px; height: 48px; margin: 20px 0 0 28px; border: 4px solid #e8e8e8; border-radius: 4px; }
.b-mail span { display: flex; align-items: center; justify-content: center; width: 48px; background: #ececec; }
.b-mail svg { width: 26px; height: 26px; }
.b-mail input { flex: 1; min-width: 0; padding: 0 10px; border: 0; background: #fff; font-size: 17px; }
.board .b-mail input::placeholder { color: #555; }
.b-foot { flex: 1; display: flex; flex-direction: column; align-items: center; padding-top: 58px; background: #f5f5f5; font-size: 14px; line-height: 24px; color: #888; }
.b-foot .b-nav { color: #444; }
.b-foot .b-nav a + a { border-color: #ddd; }
.board .b-foot hr { margin: 20px 0; }
```
FILE: ruler.js
```js
// Draws both rulers: a short tick each 100 units, a full one with a label each 1000.
const PX_PER_UNIT = 0.2493;
const NS = 'http://www.w3.org/2000/svg';

function add(parent, name, attrs, text) {
  const el = document.createElementNS(NS, name);
  for (const key in attrs) el.setAttribute(key, attrs[key]);
  if (text) el.textContent = text;
  parent.appendChild(el);
}

function draw(id, origin, vertical) {
  const svg = document.getElementById(id);
  const length = vertical ? svg.clientHeight : svg.clientWidth;
  const first = Math.ceil(-origin / PX_PER_UNIT / 100);
  for (let i = first; origin + i * 100 * PX_PER_UNIT < length; i++) {
    const at = Math.floor(origin + i * 100 * PX_PER_UNIT);
    const major = i % 10 === 0;
    const size = major ? 16 : 4;
    if (vertical) {
      add(svg, 'rect', { x: 16 - size, y: at, width: size, height: 1, class: 'tick' });
      if (major) add(svg, 'text', { transform: `translate(10 ${at - 2}) rotate(-90)` }, String(i * 100));
    } else {
      add(svg, 'rect', { x: at, y: 16 - size, width: 1, height: size, class: 'tick' });
      if (major) add(svg, 'text', { x: at + 3, y: 10 }, String(i * 100));
    }
  }
}

draw('ruler-x', 430, false);
draw('ruler-y', -6, true);
```
